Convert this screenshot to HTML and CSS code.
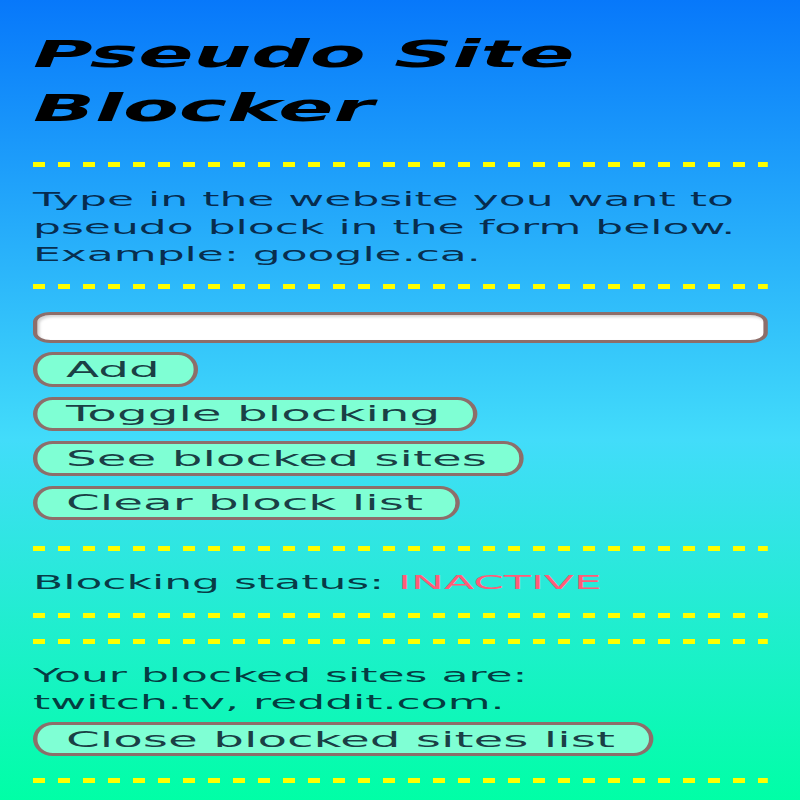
FILE: index.html
```html
<!DOCTYPE html>
<html lang="en">

<head>
  <meta charset="UTF-8">
  <meta name="viewport" content="width=device-width, initial-scale=1.0">
  <title>Pseudo Site Blocker</title>
  <link rel="stylesheet" href="styles.css">
</head>

<body>
  <main class="popup">
    <h1 class="title">Pseudo Site Blocker</h1>
    <hr class="divider">

    <p class="intro">Type in the website you want to pseudo block in the form below. Example: google.ca.</p>
    <hr class="divider divider-form">

    <form class="controls">
      <input type="text" class="site-input">
      <button type="button" class="btn">Add</button>
      <button type="button" class="btn">Toggle blocking</button>
      <button type="button" class="btn">See blocked sites</button>
      <button type="button" class="btn">Clear block list</button>
    </form>
    <hr class="divider divider-status">

    <p class="status">Blocking status: <span class="inactive">INACTIVE</span></p>
    <hr class="divider divider-after-status">

    <!-- blocked sites list -->
    <section class="blocked">
      <hr class="divider divider-list">
      <p class="list-label">Your blocked sites are:</p>
      <p class="list-sites">twitch.tv, reddit.com.</p>
      <button type="button" class="btn btn-close">Close blocked sites list</button>
      <hr class="divider divider-end">
    </section>
  </main>
</body>

</html>
```

FILE: styles.css
```css
html {
  min-height: 100%;
  background: linear-gradient(to bottom, #0778fa 0%, #42dcfa 55%, #00ffa6 100%);
}

body {
  margin: 0;
  min-height: 800px;
  overflow: hidden;
  font-family: "DejaVu Sans", Verdana, sans-serif;
  color: rgba(0, 10, 30, 0.8);
}

/* the popup is drawn stretched sideways, like the screenshot */
.popup {
  box-sizing: border-box;
  width: 363.64px;
  padding: 28px 14.5px 0 15px;
  transform: scaleX(2.2);
  transform-origin: 0 0;
}

.title {
  margin: 0;
  font-size: 37px;
  line-height: 54px;
  font-weight: bold;
  font-style: italic;
  color: #000;
}

.divider {
  height: 5px;
  margin: 26px 0 0;
  border: 0;
  background: repeating-linear-gradient(to right, #ffff00 0 5.45px, transparent 5.45px 11.36px);
}

.intro,
.status,
.list-label,
.list-sites {
  margin: 0;
  font-size: 20px;
  line-height: 27.5px;
}

.intro {
  margin-top: 19px;
}

.divider-form {
  margin-top: 15.5px;
}

.controls {
  display: flex;
  flex-direction: column;
  align-items: flex-start;
  gap: 10px;
  margin-top: 23px;
}

.site-input {
  box-sizing: border-box;
  width: 100%;
  height: 31px;
  margin: 0 0 -1px;
  border-style: solid;
  border-width: 3px 2px;
  border-color: #8d6e6a;
  border-radius: 8px / 10px;
  background: #fff;
  box-shadow: inset 1px 2px 2px rgba(0, 0, 0, 0.18);
}

.btn {
  padding: 1.75px 15px 1.75px 13px;
  border-style: solid;
  border-width: 3px 2px;
  border-color: #8d6e6a;
  border-radius: 9px / 17px;
  background: #7fffd4;
  font-family: "DejaVu Sans", Verdana, sans-serif;
  font-size: 22px;
  line-height: 25px;
  color: rgba(0, 10, 30, 0.8);
}

.divider-status {
  margin-top: 26px;
}

.status {
  margin-top: 18.3px;
}

.inactive {
  color: #ff5c78;
}

.divider-after-status {
  margin-top: 16.2px;
}

.divider-list {
  margin-top: 21px;
}

.list-label {
  margin-top: 18px;
  line-height: 27px;
}

.list-sites {
  line-height: 27px;
}

.btn-close {
  margin-top: 6px;
}

.divider-end {
  margin-top: 21.5px;
}
```
